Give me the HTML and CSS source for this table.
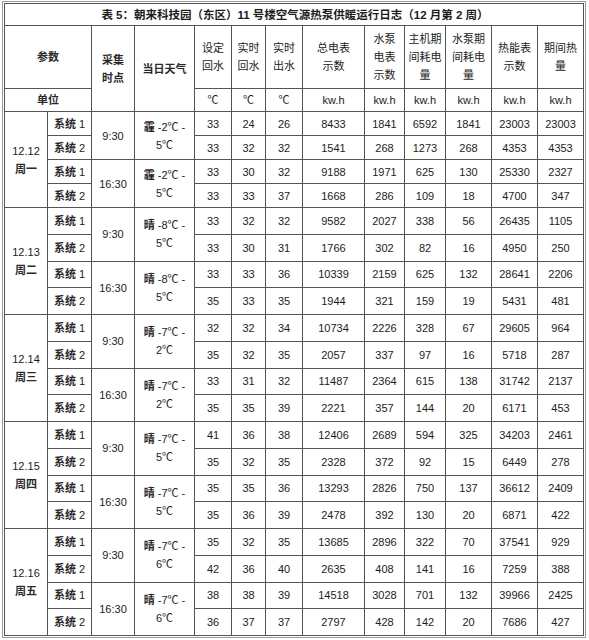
FILE: index.html
```html
<!DOCTYPE html>
<html lang="zh">
<head>
<meta charset="utf-8">
<title>表5 运行日志</title>
<link rel="stylesheet" href="styles.css">
</head>
<body>
<div class="frame">
<table class="log">
<colgroup>
<col class="c43"><col class="c44"><col class="c43"><col class="c60"><col class="c37"><col class="c34"><col class="c37"><col class="c62"><col class="c40"><col class="c41"><col class="c46"><col class="c46"><col class="c46">
</colgroup>
<tr class="r-title"><td colspan="13" class="title">表 5：朝来科技园（东区）11 号楼空气源热泵供暖运行日志（12 月第 2 周）</td></tr>
<tr class="r-head">
<td colspan="2" class="lbl">参数</td>
<td rowspan="2" class="lbl">采集<br>时点</td>
<td rowspan="2" class="lbl">当日天气</td>
<td>设定<br>回水</td>
<td>实时<br>回水</td>
<td>实时<br>出水</td>
<td>总电表<br>示数</td>
<td>水泵<br>电表<br>示数</td>
<td>主机期<br>间耗电<br>量</td>
<td>水泵期<br>间耗电<br>量</td>
<td>热能表<br>示数</td>
<td>期间热<br>量</td>
</tr>
<tr class="r-unit">
<td colspan="2" class="lbl">单位</td>
<td>℃</td><td>℃</td><td>℃</td><td>kw.h</td><td>kw.h</td><td>kw.h</td><td>kw.h</td><td>kw.h</td><td>kw.h</td>
</tr>

<tr class="r1"><td rowspan="4">12.12<br><b class="zh">周一</b></td><td><b class="zh">系统</b> 1</td><td rowspan="2">9:30</td><td rowspan="2"><b class="zh">霾</b> -2℃ -<br>5℃</td><td>33</td><td>24</td><td>26</td><td>8433</td><td>1841</td><td>6592</td><td>1841</td><td>23003</td><td>23003</td></tr>
<tr class="r1"><td><b class="zh">系统</b> 2</td><td>33</td><td>32</td><td>32</td><td>1541</td><td>268</td><td>1273</td><td>268</td><td>4353</td><td>4353</td></tr>
<tr class="r1"><td><b class="zh">系统</b> 1</td><td rowspan="2">16:30</td><td rowspan="2"><b class="zh">霾</b> -2℃ -<br>5℃</td><td>33</td><td>30</td><td>32</td><td>9188</td><td>1971</td><td>625</td><td>130</td><td>25330</td><td>2327</td></tr>
<tr class="r1"><td><b class="zh">系统</b> 2</td><td>33</td><td>33</td><td>37</td><td>1668</td><td>286</td><td>109</td><td>18</td><td>4700</td><td>347</td></tr>

<tr class="r2"><td rowspan="4">12.13<br><b class="zh">周二</b></td><td><b class="zh">系统</b> 1</td><td rowspan="2">9:30</td><td rowspan="2"><b class="zh">晴</b> -8℃ -<br>5℃</td><td>33</td><td>32</td><td>32</td><td>9582</td><td>2027</td><td>338</td><td>56</td><td>26435</td><td>1105</td></tr>
<tr class="r2"><td><b class="zh">系统</b> 2</td><td>33</td><td>30</td><td>31</td><td>1766</td><td>302</td><td>82</td><td>16</td><td>4950</td><td>250</td></tr>
<tr class="r2"><td><b class="zh">系统</b> 1</td><td rowspan="2">16:30</td><td rowspan="2"><b class="zh">晴</b> -8℃ -<br>5℃</td><td>33</td><td>33</td><td>36</td><td>10339</td><td>2159</td><td>625</td><td>132</td><td>28641</td><td>2206</td></tr>
<tr class="r2"><td><b class="zh">系统</b> 2</td><td>35</td><td>33</td><td>35</td><td>1944</td><td>321</td><td>159</td><td>19</td><td>5431</td><td>481</td></tr>

<tr class="r2"><td rowspan="4">12.14<br><b class="zh">周三</b></td><td><b class="zh">系统</b> 1</td><td rowspan="2">9:30</td><td rowspan="2"><b class="zh">晴</b> -7℃ -<br>2℃</td><td>32</td><td>32</td><td>34</td><td>10734</td><td>2226</td><td>328</td><td>67</td><td>29605</td><td>964</td></tr>
<tr class="r2"><td><b class="zh">系统</b> 2</td><td>35</td><td>32</td><td>35</td><td>2057</td><td>337</td><td>97</td><td>16</td><td>5718</td><td>287</td></tr>
<tr class="r2"><td><b class="zh">系统</b> 1</td><td rowspan="2">16:30</td><td rowspan="2"><b class="zh">晴</b> -7℃ -<br>2℃</td><td>33</td><td>31</td><td>32</td><td>11487</td><td>2364</td><td>615</td><td>138</td><td>31742</td><td>2137</td></tr>
<tr class="r2"><td><b class="zh">系统</b> 2</td><td>35</td><td>35</td><td>39</td><td>2221</td><td>357</td><td>144</td><td>20</td><td>6171</td><td>453</td></tr>

<tr class="r2"><td rowspan="4">12.15<br><b class="zh">周四</b></td><td><b class="zh">系统</b> 1</td><td rowspan="2">9:30</td><td rowspan="2"><b class="zh">晴</b> -7℃ -<br>5℃</td><td>41</td><td>36</td><td>38</td><td>12406</td><td>2689</td><td>594</td><td>325</td><td>34203</td><td>2461</td></tr>
<tr class="r2"><td><b class="zh">系统</b> 2</td><td>35</td><td>32</td><td>35</td><td>2328</td><td>372</td><td>92</td><td>15</td><td>6449</td><td>278</td></tr>
<tr class="r2"><td><b class="zh">系统</b> 1</td><td rowspan="2">16:30</td><td rowspan="2"><b class="zh">晴</b> -7℃ -<br>5℃</td><td>35</td><td>35</td><td>36</td><td>13293</td><td>2826</td><td>750</td><td>137</td><td>36612</td><td>2409</td></tr>
<tr class="r2"><td><b class="zh">系统</b> 2</td><td>35</td><td>36</td><td>39</td><td>2478</td><td>392</td><td>130</td><td>20</td><td>6871</td><td>422</td></tr>

<tr class="r2"><td rowspan="4">12.16<br><b class="zh">周五</b></td><td><b class="zh">系统</b> 1</td><td rowspan="2">9:30</td><td rowspan="2"><b class="zh">晴</b> -7℃ -<br>6℃</td><td>35</td><td>32</td><td>35</td><td>13685</td><td>2896</td><td>322</td><td>70</td><td>37541</td><td>929</td></tr>
<tr class="r2"><td><b class="zh">系统</b> 2</td><td>42</td><td>36</td><td>40</td><td>2635</td><td>408</td><td>141</td><td>16</td><td>7259</td><td>388</td></tr>
<tr class="r2"><td><b class="zh">系统</b> 1</td><td rowspan="2">16:30</td><td rowspan="2"><b class="zh">晴</b> -7℃ -<br>6℃</td><td>38</td><td>38</td><td>39</td><td>14518</td><td>3028</td><td>701</td><td>132</td><td>39966</td><td>2425</td></tr>
<tr class="r2"><td><b class="zh">系统</b> 2</td><td>36</td><td>37</td><td>37</td><td>2797</td><td>428</td><td>142</td><td>20</td><td>7686</td><td>427</td></tr>
</table>
</div>
</body>
</html>
```
FILE: styles.css
```css
html, body {
  margin: 0;
  padding: 0;
  background: #ffffff;
}
body {
  font-family: "Liberation Sans", "Noto Sans CJK SC", sans-serif;
  color: #1c1c1c;
}
.frame {
  display: inline-block;
  margin: 1px 0 0 2px;
  padding: 1px;
  border: 1px solid #9a9a9a;
}
.log {
  border-collapse: collapse;
  table-layout: fixed;
  width: 580px;
}
.log td {
  border: 1px solid #555555;
  padding: 0;
  text-align: center;
  vertical-align: middle;
  font-size: 11px;
  line-height: 18px;
  white-space: nowrap;
  overflow: hidden;
}
.c43 { width: 43px; }
.c44 { width: 44px; }
.c60 { width: 60px; }
.c37 { width: 37px; }
.c34 { width: 34px; }
.c62 { width: 62px; }
.c40 { width: 40px; }
.c41 { width: 41px; }
.c46 { width: 46px; }
.r-title { height: 22px; }
.r-head { height: 63px; }
.r-unit { height: 23px; }
.r1 { height: 24px; }
.r2 { height: 26.75px; }
.log td.title {
  font-size: 11.5px;
  font-weight: bold;
  padding-left: 2px;
}
.log td.lbl {
  font-weight: bold;
  color: #2a2a2a;
}
.zh {
  font-weight: bold;
  color: #2a2a2a;
}
```
